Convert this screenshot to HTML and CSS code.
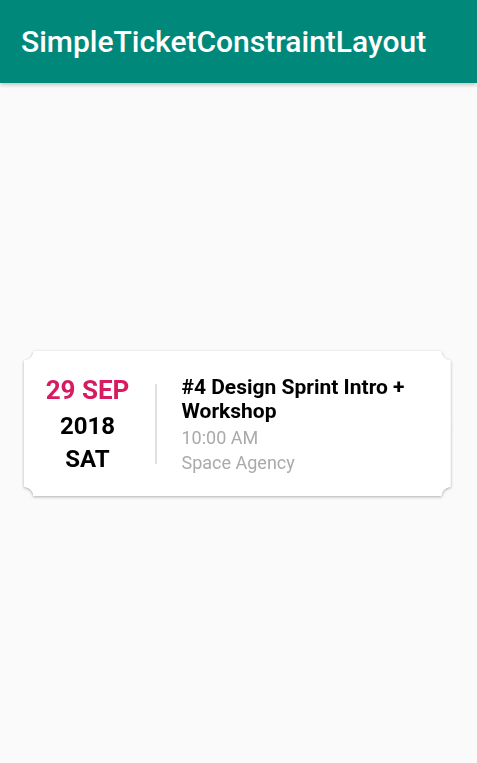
FILE: index.html
```html
<!DOCTYPE html>
<html>
<head>
<meta charset="utf-8">
<link rel="stylesheet" href="styles.css">
</head>
<body>
<div class="app">
  <header class="toolbar">
    <h1 class="title">SimpleTicketConstraintLayout</h1>
  </header>
  <main class="content">
    <div class="ticket">
      <div class="date">
        <div class="day">29 SEP</div>
        <div class="year">2018</div>
        <div class="weekday">SAT</div>
      </div>
      <div class="divider"></div>
      <div class="info">
        <div class="event">#4 Design Sprint Intro + Workshop</div>
        <div class="meta meta-first">10:00 AM</div>
        <div class="meta">Space Agency</div>
      </div>
    </div>
  </main>
</div>
</body>
</html>
```
FILE: styles.css
```css
html, body {
  margin: 0;
  padding: 0;
  height: 100%;
}
body {
  background: #fafafa;
  font-family: Roboto, "Noto Sans", sans-serif;
}
.app {
  display: flex;
  flex-direction: column;
  height: 763px;
}
.toolbar {
  height: 83px;
  background: #00897b;
  display: flex;
  align-items: center;
  padding-left: 21px;
  box-shadow: 0 2px 4px rgba(0,0,0,0.22);
  position: relative;
  z-index: 1;
  flex: none;
}
.title {
  margin: 0;
  color: #fff;
  font-size: 30px;
  font-weight: 500;
  line-height: 35px;
}
.content {
  flex: 1;
  display: flex;
  align-items: center;
  justify-content: center;
}
.ticket {
  width: 427px;
  height: 146px;
  margin-left: -3px;
  margin-top: 1px;
  box-sizing: border-box;
  display: flex;
  align-items: center;
  padding-left: 21px;
  background:
    radial-gradient(circle at top left, transparent 9px, #fff 9.6px) top left / 51% 51% no-repeat,
    radial-gradient(circle at top right, transparent 9px, #fff 9.6px) top right / 51% 51% no-repeat,
    radial-gradient(circle at bottom left, transparent 9px, #fff 9.6px) bottom left / 51% 51% no-repeat,
    radial-gradient(circle at bottom right, transparent 9px, #fff 9.6px) bottom right / 51% 51% no-repeat;
  filter: drop-shadow(0 1px 1.5px rgba(0,0,0,0.3));
}
.date {
  width: 86px;
  display: flex;
  flex-direction: column;
  align-items: center;
  font-weight: 700;
  line-height: 28px;
  padding-top: 2px;
}
.day {
  color: #d81b60;
  font-size: 26px;
}
.year, .weekday {
  color: #000;
  font-size: 24px;
}
.year {
  margin-top: 8px;
}
.weekday {
  margin-top: 5px;
}
.divider {
  width: 2px;
  height: 80px;
  background: #e0e0e0;
  margin-left: 24px;
  margin-right: 25px;
}
.info {
  flex: 1;
  display: flex;
  flex-direction: column;
  padding-right: 20px;
  padding-top: 3px;
}
.event {
  font-size: 21px;
  font-weight: 700;
  line-height: 24px;
  color: #000;
}
.meta {
  font-size: 18px;
  line-height: 25px;
  color: #aaaaaa;
}
.meta-first {
  margin-top: 2px;
}
```
